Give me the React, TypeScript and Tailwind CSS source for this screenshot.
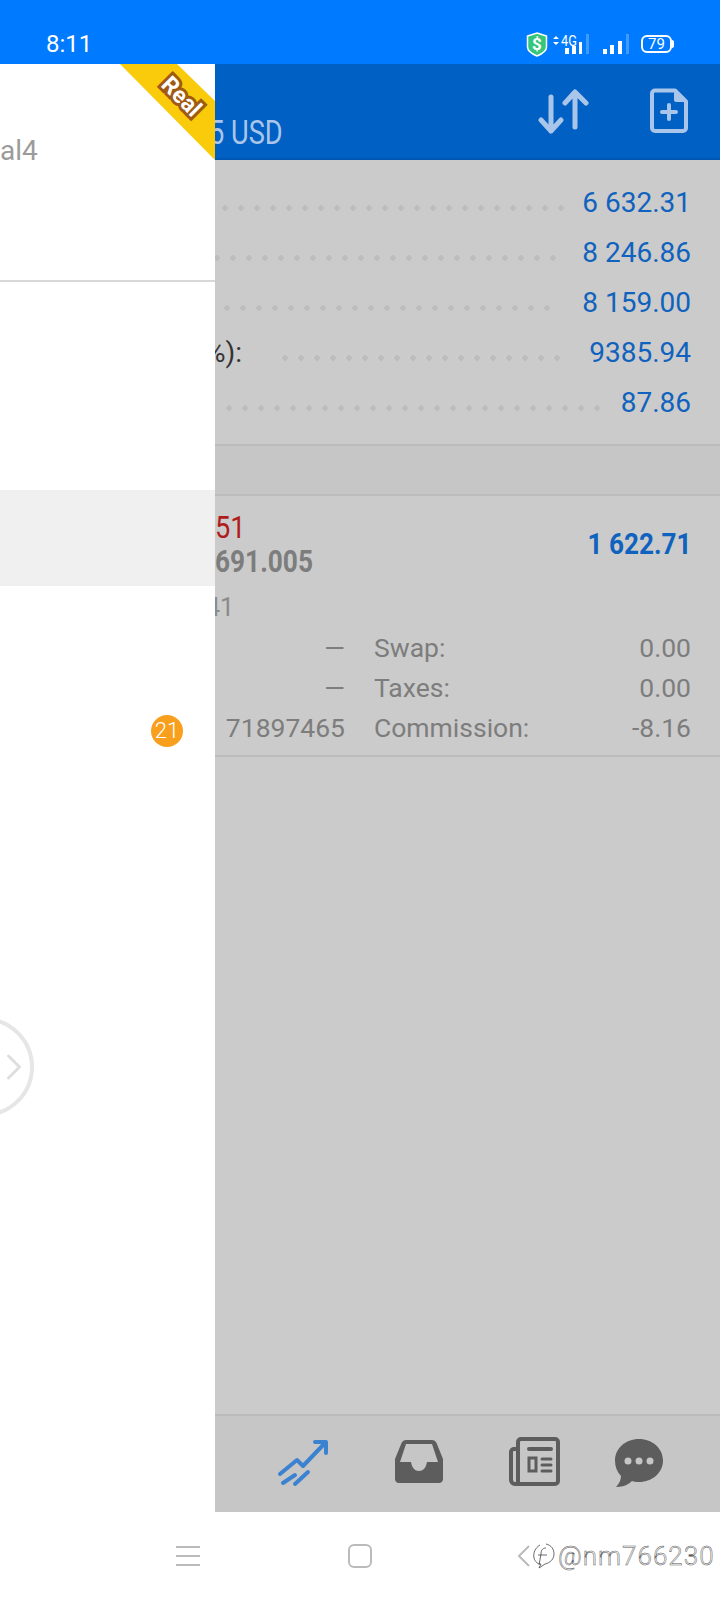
import React from "react";
import { ChevronRight } from "lucide-react";

const summary = [
  { value: "6 632.31", dots: "w-[352px] mr-[13px]" },
  { value: "8 246.86", dots: "w-[352px] mr-[21px]" },
  { value: "8 159.00", dots: "w-[352px] mr-[27px]" },
  { value: "9385.94", label: "%):", dots: "w-[288px] mr-[24px]" },
  { value: "87.86", dots: "w-[384px] mr-[16px]" },
];

const StatusBar = () => (
  <div className="h-16 shrink-0 bg-[#007aff] flex items-center text-white pl-[46px] pr-[46px] pt-[24px]">
    <span className="text-[24px] leading-none">8:11</span>
    <div className="ml-auto flex items-center">
      <svg width="22" height="25" viewBox="0 0 22 25">
        <path d="M11 1l9.500 3v11c0 4-4.500 7-9.500 9C6 22 1.500 19 1.500 15V4z" fill="#35c67c" stroke="#fff" strokeWidth="1.500" />
        <text x="11" y="18" textAnchor="middle" fontSize="17" fontWeight="700" fill="#fff" fontFamily="Roboto">$</text>
      </svg>
      <div className="ml-[5px] w-[38px] h-[20px] relative">
        <svg className="absolute left-0 top-0" width="38" height="20" viewBox="0 0 38 20" fill="#fff">
          <path d="M3 2l3 3H0zM3 11l3-3H0z" />
          <rect x="12" y="14" width="4" height="6" />
          <rect x="19" y="12" width="4" height="8" />
          <rect x="26" y="8" width="3" height="12" />
          <rect x="33" y="0" width="3" height="20" fillOpacity=".25" />
        </svg>
        <span className="absolute left-[8px] top-0 text-[15px] leading-[14px] scale-x-[.85] origin-left">4G</span>
      </div>
      <svg width="28" height="20" viewBox="0 0 28 20" className="ml-[11px]" fill="#fff">
        <rect x="1" y="15" width="4" height="5" />
        <rect x="8" y="11" width="4" height="9" />
        <rect x="16" y="7" width="4" height="13" />
        <rect x="24" y="0" width="3" height="20" fillOpacity=".25" />
      </svg>
      <div className="ml-[11px] w-[31px] h-[18px] rounded-[6px] border-2 border-white text-[15px] leading-[14px] text-center">79</div>
      <div className="w-[2px] h-[8px] bg-white rounded-r-sm" />
    </div>
  </div>
);

const Drawer = () => (
  <div className="w-[215px] shrink-0 bg-white flex flex-col relative">
    <div className="h-[218px] border-b-2 border-[#d8d8d8] flex justify-start pt-[71px]">
      <span className="text-[28px] leading-8 text-[#9b9b9b]">al4</span>
    </div>
    <svg className="absolute left-[120px] top-0" width="95" height="96" viewBox="0 0 95 96">
      <polygon points="0,0 57,0 95,37 95,96" fill="#f9cb0a" />
    </svg>
    <span className="absolute left-[153px] top-[19px] w-[56px] text-center rotate-45 text-[23px] leading-7 font-bold text-white [-webkit-text-stroke:6px_#a05a12] [paint-order:stroke_fill]">
      Real
    </span>
    <div className="h-[96px] mt-[208px] bg-[#f0f0f0]" />
    <div className="mt-[129px] pr-[32px] flex justify-end">
      <div className="size-8 rounded-full bg-[#f8a01e] text-white text-[22px] leading-8 text-center font-light">21</div>
    </div>
    <div className="relative mt-[272px] h-[96px] w-[36px]">
      <svg width="36" height="96" viewBox="0 0 36 96" fill="none">
        <circle cx="-16" cy="48" r="48" stroke="#e6e6e6" strokeWidth="4" />
      </svg>
      <ChevronRight size={44} strokeWidth={1.6} className="absolute left-[-8px] top-[26px] text-[#dedede]" />
    </div>
  </div>
);

const Header = () => (
  <div className="h-24 shrink-0 bg-[#0060c4] border-b-2 border-[#0058b4] flex text-[#a9c6ea]">
    <span className="self-end mb-[8px] -ml-[6px] text-[34px] leading-9 inline-block origin-left scale-x-[.8]">5 USD</span>
    <svg className="ml-auto mr-[60px] mt-[24px]" width="52" height="48" viewBox="0 0 52 48" fill="none" stroke="currentColor" strokeWidth="5" strokeLinecap="round" strokeLinejoin="round">
      <path d="M13 9v34M3 32l10 11 10-11M37 4v35M27 15L37 4l11 11" />
    </svg>
    <svg className="mr-[32px] mt-[24px]" width="38" height="46" viewBox="0 0 38 46" fill="none">
      <path d="M5 2.500h20l11 11V40a3 3 0 0 1-3 3H5a3 3 0 0 1-3-3V5.500a3 3 0 0 1 3-3z" stroke="currentColor" strokeWidth="4" strokeLinejoin="round" />
      <path d="M24 2l12 12H26a2 2 0 0 1-2-2z" fill="currentColor" />
      <path d="M19 17v14M12 24h14" stroke="currentColor" strokeWidth="4" strokeLinecap="round" />
    </svg>
  </div>
);

const Summary = () => (
  <div className="pt-[18px] pb-[16px] pr-[29px] border-b-2 border-[#bcbcbc]">
    {summary.map((row) => (
      <div key={row.value} className="h-[50px] flex items-center justify-end relative">
        {row.label && <span className="absolute -left-[10px] text-[28px] text-[#333] whitespace-nowrap">{row.label}</span>}
        <div className={`h-[6px] mt-[9px] shrink-0 bg-[radial-gradient(circle,#bdbdbd_2.5px,transparent_3px)] bg-[length:16px_6px] bg-[position:right_center] ${row.dots}`} />
        <span className="text-[28px] text-[#0f62bd] whitespace-nowrap shrink-0">{row.value}</span>
      </div>
    ))}
  </div>
);

const Trade = () => (
  <div className="h-[261px] border-b-2 border-[#bcbcbc] pt-[14px] pr-[29px] text-[#7d7d7d]">
    <div className="flex items-center justify-between h-[68px]">
      <div className="flex flex-col">
        <span className="text-[#b01c1c] text-[32px] leading-[34px] inline-block origin-left scale-x-[.85]">51</span>
        <span className="font-bold text-[32px] leading-[34px] inline-block origin-left scale-x-[.82]">691.005</span>
      </div>
      <span className="-mt-[2px] font-bold text-[#0f62bd] text-[30px] inline-block origin-right scale-x-[.87] whitespace-nowrap">1 622.71</span>
    </div>
    <div className="text-[25px] leading-8 mt-[14px] -ml-[9px] text-[#8a8a8a] w-[26px] text-right">41</div>
    <div className="mt-[4px] grid grid-cols-[130px_1fr_auto] text-[26.5px] leading-[40px]">
      <span className="text-right">—</span>
      <span className="pl-[29px]">Swap:</span>
      <span className="text-right">0.00</span>
      <span className="text-right">—</span>
      <span className="pl-[29px]">Taxes:</span>
      <span className="text-right">0.00</span>
      <span className="text-right">71897465</span>
      <span className="pl-[29px]">Commission:</span>
      <span className="text-right">-8.16</span>
    </div>
  </div>
);

const TabBar = () => (
  <div className="h-[98px] shrink-0 bg-[#c6c6c6] border-t-2 border-[#bcbcbc] flex items-center">
    <svg className="ml-[62px]" width="52" height="50" viewBox="0 0 52 50" fill="none" stroke="#3b82d0" strokeWidth="4" strokeLinecap="round" strokeLinejoin="round">
      <path d="M3 35l17-14 6 6L48 4M38 3h11v11" />
      <path d="M6 44l12-8M18 45l13-12" />
    </svg>
    <svg className="ml-[65px] -mt-[6px]" width="50" height="44" viewBox="0 0 50 44">
      <path d="M12 1h26c2 0 3.500 1 4.500 3L49 20v20c0 2-1.500 4-4 4H5c-2.500 0-4-2-4-4V20L7.500 4C8.500 2 10 1 12 1z" fill="#5d5d5d" />
      <path d="M12 5h26l6 18H33c-1 6-4 9-8 9s-7-3-8-9H6z" fill="#c6c6c6" />
    </svg>
    <svg className="ml-[64px] -mt-[4px]" width="52" height="50" viewBox="0 0 52 50" fill="none" stroke="#5d5d5d" strokeLinecap="round">
      <path d="M8 12H6a3 3 0 0 0-3 3v28a4 4 0 0 0 4 4h40a3 3 0 0 0 3-3V5a3 3 0 0 0-3-3H13a3 3 0 0 0-3 3v42" strokeWidth="4" />
      <path d="M21 12h22" strokeWidth="4" />
      <rect x="21" y="21" width="7" height="13" strokeWidth="3" />
      <path d="M34 22h9M34 28h9M34 34h9" strokeWidth="3" />
    </svg>
    <svg className="ml-[54px] -mt-[2px]" width="50" height="50" viewBox="0 0 50 50">
      <path d="M25 1c13.500 0 24 9.500 24 21.500S38.500 44 25 44c-2.500 0-5-.3-7-1-3 3-8 6-16 6 3-3 5-7 5-11C3 34 1 28.500 1 22.500 1 10.500 11.500 1 25 1z" fill="#5d5d5d" />
      <circle cx="14" cy="23" r="3.500" fill="#c6c6c6" />
      <circle cx="25" cy="23" r="3.500" fill="#c6c6c6" />
      <circle cx="36" cy="23" r="3.500" fill="#c6c6c6" />
    </svg>
  </div>
);

const NavBar = () => (
  <div className="h-[88px] shrink-0 bg-white flex items-center">
    <div className="ml-[176px] w-6 flex flex-col gap-[7px]">
      <div className="h-[2px] bg-[#bbb]" />
      <div className="h-[2px] bg-[#bbb]" />
      <div className="h-[2px] bg-[#bbb]" />
    </div>
    <div className="ml-[148px] size-6 rounded-[6px] border-2 border-[#bbb]" />
    <svg className="ml-[146px]" width="12" height="22" viewBox="0 0 12 22" fill="none" stroke="#bbb" strokeWidth="2">
      <path d="M11 1L1 11l10 10" />
    </svg>
    <svg className="ml-[2px]" width="24" height="28" viewBox="0 0 24 28" fill="none" stroke="#444" strokeWidth=".8">
      <path d="M8 3C3 6 1 11 2 16c1 4 4 6 7 6l-2 4 6-4c5-1 9-5 9-10 0-5-3-9-8-10" />
      <path d="M14 6c-4 0-5 3-5 6l-2 11M6 13h9" />
    </svg>
    <span className="ml-[2px] text-[26px] leading-none font-light tracking-[1px] text-white [-webkit-text-stroke:.5px_#555]">@nm766230</span>
  </div>
);

export default function App() {
  return (
    <div className="w-[720px] h-[1600px] flex flex-col overflow-hidden bg-white font-['Roboto',sans-serif]">
      <StatusBar />
      <div className="flex-1 flex min-h-0">
        <Drawer />
        <div className="flex-1 min-w-0 flex flex-col bg-[#cbcbcb] overflow-hidden">
          <Header />
          <Summary />
          <div className="h-[50px] shrink-0 bg-[#c6c6c6] border-b-2 border-[#bcbcbc]" />
          <Trade />
          <div className="flex-1" />
          <TabBar />
        </div>
      </div>
      <NavBar />
    </div>
  );
}
